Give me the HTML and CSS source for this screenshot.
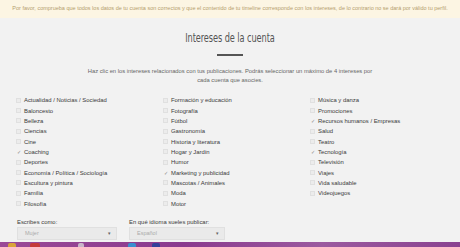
FILE: index.html
```html
<!DOCTYPE html>
<html lang="es">
<head>
<meta charset="utf-8">
<link rel="stylesheet" href="styles.css">
</head>
<body>
<div class="banner">Por favor, comprueba que todos los datos de tu cuenta son correctos y que el contenido de tu timeline corresponde con los intereses, de lo contrario no se dará por válido tu perfil.</div>
<main class="page">
  <h1 class="title">Intereses de la cuenta</h1>
  <div class="rule"></div>
  <p class="intro">Haz clic en los intereses relacionados con tus publicaciones. Podrás seleccionar un máximo de 4 intereses por<br>cada cuenta que asocies.</p>
  <div class="grid">
    <ul class="col">
      <li><span class="box"></span>Actualidad / Noticias / Sociedad</li>
      <li><span class="box"></span>Baloncesto</li>
      <li><span class="box"></span>Belleza</li>
      <li><span class="box"></span>Ciencias</li>
      <li><span class="box"></span>Cine</li>
      <li><span class="box checked">✓</span>Coaching</li>
      <li><span class="box"></span>Deportes</li>
      <li><span class="box"></span>Economía / Política / Sociología</li>
      <li><span class="box"></span>Escultura y pintura</li>
      <li><span class="box"></span>Familia</li>
      <li><span class="box"></span>Filosofía</li>
    </ul>
    <ul class="col">
      <li><span class="box"></span>Formación y educación</li>
      <li><span class="box"></span>Fotografía</li>
      <li><span class="box"></span>Fútbol</li>
      <li><span class="box"></span>Gastronomía</li>
      <li><span class="box"></span>Historia y literatura</li>
      <li><span class="box"></span>Hogar y Jardín</li>
      <li><span class="box"></span>Humor</li>
      <li><span class="box checked">✓</span>Marketing y publicidad</li>
      <li><span class="box"></span>Mascotas / Animales</li>
      <li><span class="box"></span>Moda</li>
      <li><span class="box"></span>Motor</li>
    </ul>
    <ul class="col">
      <li><span class="box"></span>Música y danza</li>
      <li><span class="box"></span>Promociones</li>
      <li><span class="box checked">✓</span>Recursos humanos / Empresas</li>
      <li><span class="box"></span>Salud</li>
      <li><span class="box"></span>Teatro</li>
      <li><span class="box checked">✓</span>Tecnología</li>
      <li><span class="box"></span>Televisión</li>
      <li><span class="box"></span>Viajes</li>
      <li><span class="box"></span>Vida saludable</li>
      <li><span class="box"></span>Videojuegos</li>
    </ul>
  </div>
  <div class="fields">
    <div class="field f1">
      <label>Escribes como:</label>
      <div class="select"><span>Mujer</span><span class="arrow">▾</span></div>
    </div>
    <div class="field f2">
      <label>En qué idioma sueles publicar:</label>
      <div class="select"><span>Español</span><span class="arrow">▾</span></div>
    </div>
  </div>
</main>
<div class="taskbar">
  <span class="tb t1"></span><span class="tb t2"></span><span class="tb t3"></span><span class="tb t4"></span><span class="tb t5"></span>
</div>
</body>
</html>
```
FILE: styles.css
```css
* { box-sizing: border-box; }
html, body { margin: 0; padding: 0; }
body {
  width: 460px;
  height: 247px;
  overflow: hidden;
  background: #f2f2f2;
  font-family: "Liberation Sans", Arial, sans-serif;
  color: #444;
}
.banner {
  height: 18px;
  background: #fcf5e3;
  color: #b59e6e;
  font-size: 5.5px;
  text-align: center;
  padding-top: 5px;
  white-space: nowrap;
}
.page {
  display: flex;
  flex-direction: column;
  align-items: center;
  height: 224px;
}
.title {
  margin: 12px 0 0;
  font-family: "DejaVu Sans Condensed", "DejaVu Sans", sans-serif;
  font-weight: normal;
  font-size: 13px;
  line-height: 16px;
  color: #555;
  transform: scaleX(0.7);
  letter-spacing: -0.1px;
}
.rule {
  width: 26px;
  height: 2px;
  background: #555;
  margin-top: 8px;
}
.intro {
  margin: 11px 0 0;
  font-size: 5.8px;
  line-height: 9px;
  color: #666;
  text-align: center;
}
.grid {
  align-self: stretch;
  display: grid;
  grid-template-columns: 147px 147px 147px;
  padding-left: 16px;
  margin-top: 10px;
}
.col {
  list-style: none;
  margin: 0;
  padding: 0;
}
.col li {
  display: flex;
  align-items: center;
  height: 10.35px;
  font-size: 5.9px;
  color: #3a3a3a;
  white-space: nowrap;
}
.box {
  width: 5px;
  height: 5px;
  border: 1px solid #e0e0e0;
  background: #ececec;
  margin-right: 3px;
  font-size: 5px;
  line-height: 4px;
  color: #888;
  display: flex;
  align-items: center;
  justify-content: center;
}
.box.checked {
  border-color: transparent;
  background: transparent;
}
.fields {
  align-self: stretch;
  display: flex;
  padding-left: 17px;
  margin-top: 10px;
  gap: 12px;
}
.field label {
  display: block;
  font-size: 5.9px;
  color: #3a3a3a;
  height: 8px;
}
.select {
  display: flex;
  justify-content: space-between;
  align-items: center;
  height: 13px;
  background: #eaeaea;
  border: 1px solid #e0e0e0;
  padding: 0 5px 0 7px;
  font-size: 5.5px;
  color: #aaa;
}
.f1 .select { width: 100px; }
.f2 .select { width: 96px; }
.arrow { color: #666; font-size: 5px; }
.taskbar {
  height: 5px;
  background: linear-gradient(90deg, #9a4a97 0%, #8a3a8e 40%, #9b5a9f 70%, #8a4290 100%);
  position: relative;
}
.tb { position: absolute; top: 1px; height: 4px; border-radius: 2px 2px 0 0; }
.t1 { left: 8px; width: 8px; background: #d9a43a; }
.t2 { left: 30px; width: 10px; background: #c43a3a; }
.t3 { left: 78px; width: 6px; background: #c9b6c9; }
.t4 { left: 128px; width: 8px; background: #3a8fd0; }
.t5 { left: 152px; width: 8px; background: #34409a; }
```
